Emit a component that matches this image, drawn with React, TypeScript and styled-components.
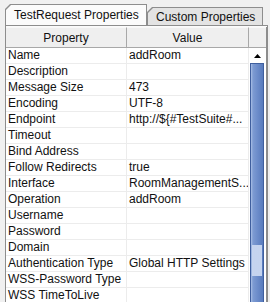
import React from 'react'
import styled, { createGlobalStyle } from 'styled-components'

const Global = createGlobalStyle`
	html, body {
		margin: 0;
		padding: 0;
		background: #f0f0f0;
	}
`

const Frame = styled.div`
	width: 270px;
	height: 302px;
	overflow: hidden;
	background: #f0f0f0;
	font-family: 'Liberation Sans', Arial, sans-serif;
	font-size: 12px;
	color: #111;
`

const TabBar = styled.div`
	display: flex;
	align-items: flex-end;
	height: 25px;
	padding-left: 5px;
	box-sizing: border-box;
`

const corner = 'polygon(5px 0, 100% 0, 100% 100%, 0 100%, 0 5px)'

const TabOuter = styled.div<{ $active?: boolean; $width: number }>`
	width: ${(p) => p.$width}px;
	height: ${(p) => (p.$active ? 21 : 18)}px;
	background: #8d8d8d;
	clip-path: ${corner};
	padding: 1px 1px 0 1px;
	box-sizing: border-box;
`

const TabInner = styled.div<{ $active?: boolean }>`
	height: 100%;
	background: ${(p) => (p.$active ? '#fbfbfb' : '#e3e3e3')};
	clip-path: ${corner};
	display: flex;
	align-items: center;
	padding-left: ${(p) => (p.$active ? 8 : 8)}px;
	padding-top: ${(p) => (p.$active ? 0 : 1)}px;
	box-sizing: border-box;
	white-space: nowrap;
`

const Panel = styled.div`
	margin-left: 5px;
	width: 263px;
	border-top: 1px solid #8d8d8d;
	border-left: 1px solid #8d8d8d;
	border-right: 1px solid #8d8d8d;
	padding-top: 1px;
	background: #fbfbfb;
	display: flex;
	height: 300px;
	box-sizing: border-box;
`

const Table = styled.div`
	flex: 1;
	display: flex;
	flex-direction: column;
	background: #fff;
`

const HeaderRow = styled.div`
	display: grid;
	grid-template-columns: 121px 122px;
	height: 21px;
`

const HeaderCell = styled.div`
	background: #efefef;
	border-top: 1px solid #f8f8f8;
	border-bottom: 1px solid #a8a8a8;
	border-right: 1px solid #a8a8a8;
	box-sizing: border-box;
	display: flex;
	align-items: center;
	justify-content: center;
`

const Row = styled.div`
	display: grid;
	grid-template-columns: 121px 122px;
	height: 16px;
	border-bottom: 1px solid #ececec;
	box-sizing: border-box;
`

const Cell = styled.div`
	padding-left: 2px;
	line-height: 15px;
	white-space: nowrap;
	overflow: hidden;
	border-right: 1px solid #ececec;
`

const ScrollCol = styled.div`
	width: 19px;
	display: flex;
	flex-direction: column;
	border-right: 1px solid #8d8d8d;
	box-sizing: border-box;
`

const ScrollHead = styled.div`
	height: 21px;
	background: #efefef;
	border-top: 1px solid #f8f8f8;
	border-bottom: 1px solid #a8a8a8;
	box-sizing: border-box;
`

const Track = styled.div`
	flex: 1;
	background: #fff;
	display: flex;
	flex-direction: column;
	padding-left: 1px;
	padding-right: 2px;
`

const ArrowButton = styled.div`
	height: 15px;
	display: flex;
	align-items: center;
	justify-content: center;
`

const Thumb = styled.div`
	flex: 1;
	border: 1px solid #3f5f9e;
	border-bottom: none;
	background: linear-gradient(to right, #a9bfe6 0, #7d9bd2 2px, #6e8ecb 50%, #587bbd 100%);
	display: flex;
	flex-direction: column;
	align-items: center;
	padding-top: 181px;
`

const Grip = styled.div`
	width: 10px;
	height: 31px;
	background-image: radial-gradient(circle, #c8d6f0 0.7px, transparent 0.9px);
	background-size: 2px 2px;
`

const rows: [string, string][] = [
	['Name', 'addRoom'],
	['Description', ''],
	['Message Size', '473'],
	['Encoding', 'UTF-8'],
	['Endpoint', 'http://${#TestSuite#...'],
	['Timeout', ''],
	['Bind Address', ''],
	['Follow Redirects', 'true'],
	['Interface', 'RoomManagementS...'],
	['Operation', 'addRoom'],
	['Username', ''],
	['Password', ''],
	['Domain', ''],
	['Authentication Type', 'Global HTTP Settings'],
	['WSS-Password Type', ''],
	['WSS TimeToLive', ''],
	['', ''],
]

const App = () => {
	return (
		<Frame>
			<Global />
			<TabBar>
				<TabOuter $active $width={142}>
					<TabInner $active>TestRequest Properties</TabInner>
				</TabOuter>
				<TabOuter $width={116}>
					<TabInner>Custom Properties</TabInner>
				</TabOuter>
			</TabBar>
			<Panel>
				<Table>
					<HeaderRow>
						<HeaderCell>Property</HeaderCell>
						<HeaderCell>Value</HeaderCell>
					</HeaderRow>
					{rows.map(([name, value], i) => (
						<Row key={i}>
							<Cell>{name}</Cell>
							<Cell>{value}</Cell>
						</Row>
					))}
				</Table>
				<ScrollCol>
					<ScrollHead />
					<Track>
						<ArrowButton>
							<svg width="7" height="4" viewBox="0 0 7 4">
								<path d="M3.5 0 L7 4 L0 4 Z" fill="#000" />
							</svg>
						</ArrowButton>
						<Thumb>
							<Grip />
						</Thumb>
					</Track>
				</ScrollCol>
			</Panel>
		</Frame>
	)
}

export default App
